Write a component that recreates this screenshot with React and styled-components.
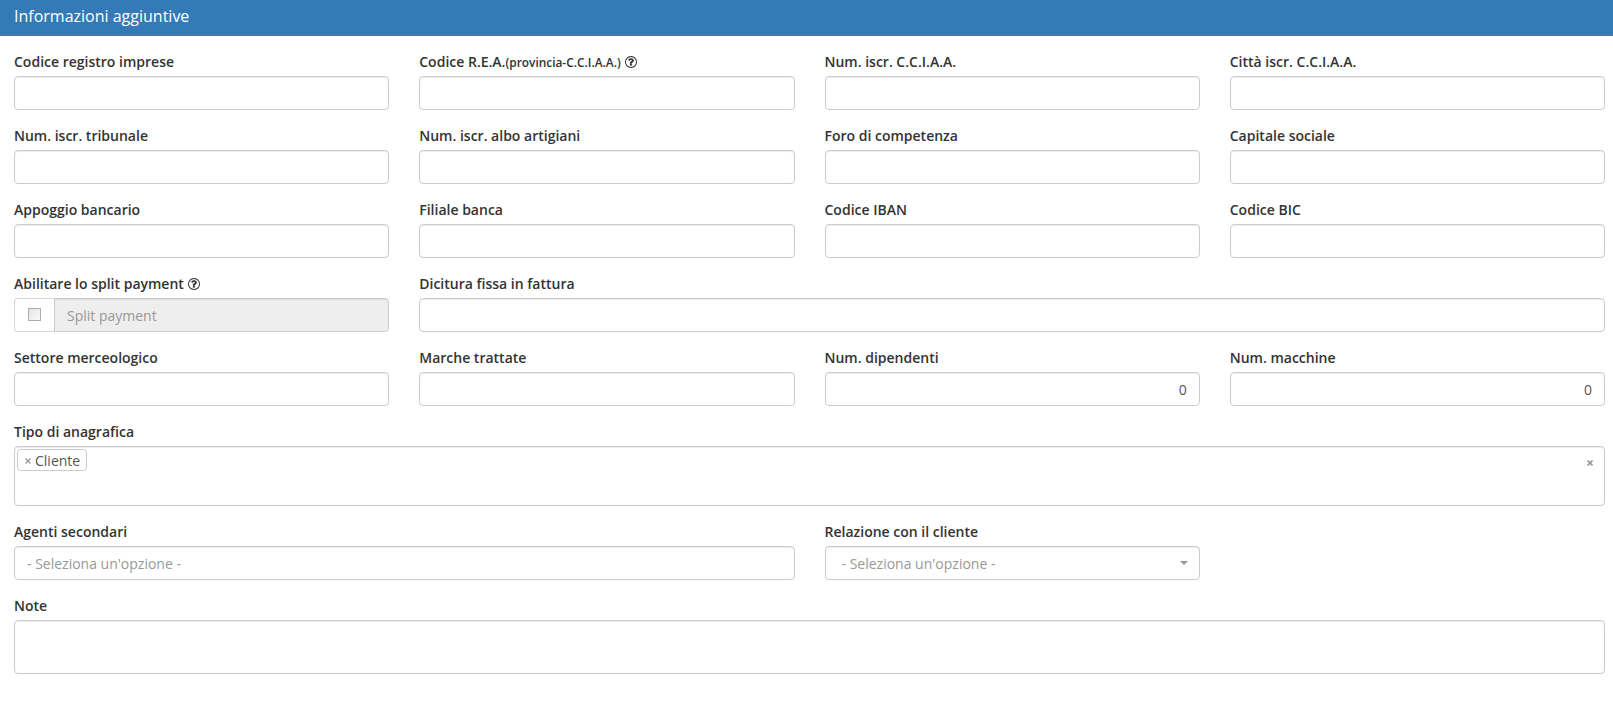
import React from "react";
import styled, { createGlobalStyle, css } from "styled-components";

const GlobalStyle = createGlobalStyle`
  *, *::before, *::after { box-sizing: border-box; }
  body {
    margin: 0;
    background: #fff;
    color: #333;
    font: 14px/20px "Open Sans", "Noto Sans", sans-serif;
  }
`;

const Panel = styled.section`
  width: 100%;
`;

const PanelHeading = styled.header`
  height: 36px;
  padding: 6px 14px;
  background: #337ab7;
  border-bottom: 2px solid #4e75ac;
`;

const PanelTitle = styled.h3`
  margin: 0;
  color: #fff;
  font-size: 16px;
  font-weight: 400;
  line-height: 20px;
`;

const FormGrid = styled.form`
  display: grid;
  grid-template-columns: repeat(4, minmax(0, 1fr));
  gap: 15px 30px;
  padding: 15px 8px 27px 14px;
`;

const FieldGroup = styled.div`
  grid-column: span ${(p) => p.$span || 1};
  display: flex;
  flex-direction: column;
  gap: 5px;
`;

const Label = styled.label`
  display: flex;
  align-items: center;
  height: 20px;
  padding-top: 2px;
  font-weight: 600;
  line-height: 20px;
  white-space: nowrap;
`;

const Small = styled.small`
  font-size: 85%;
`;

const HelpSvg = styled.svg`
  display: block;
  width: 12px;
  height: 12px;
  margin-left: 4.2px;
  fill: #333;
`;

const control = css`
  border: 1px solid #ccc;
  border-radius: 4px;
  background: #fff;
  box-shadow: inset 0 1px 1px rgba(0, 0, 0, 0.075);
  color: #555;
  font: inherit;
`;

const Input = styled.input`
  ${control}
  display: block;
  width: 100%;
  height: 34px;
  margin: 0;
  padding: 6px 12px;
  text-align: ${(p) => p.$align || "left"};
  outline: none;
  &::placeholder { color: #999; opacity: 1; }
`;

const Textarea = styled.textarea`
  ${control}
  display: block;
  width: 100%;
  height: 54px;
  margin: 0;
  padding: 6px 12px;
  resize: none;
  outline: none;
`;

const InputGroup = styled.div`
  display: flex;
`;

const Addon = styled.span`
  display: flex;
  flex: none;
  width: 40px;
  height: 34px;
  padding: 9px 0 0 13px;
  border: 1px solid #d2d6de;
  border-right: 0;
  border-radius: 4px 0 0 4px;
`;

const Checkbox = styled.input`
  appearance: none;
  width: 13px;
  height: 13px;
  margin: 0;
  border: 1px solid #acacac;
  background: linear-gradient(135deg, #e4e4e4, #fafafa);
`;

const DisabledInput = styled(Input)`
  border-radius: 0 4px 4px 0;
  background: #eee;
`;

const MultiSelect = styled.div`
  ${control}
  display: flex;
  justify-content: space-between;
  align-items: flex-start;
  height: 60px;
  padding: 2px 11px 0 2px;
`;

const Tag = styled.span`
  display: flex;
  align-items: center;
  gap: 4px;
  height: 22px;
  padding: 2px 6px 0 7px;
  border: 1px solid #ccc;
  border-radius: 4px;
  color: #555;
`;

const RemoveSvg = styled.svg`
  display: block;
  width: 6px;
  height: 6px;
  margin-top: ${(p) => p.$top || 0}px;
  stroke: #999;
  stroke-width: ${(p) => (p.$bold ? 1.7 : 1.4)};
`;

const HalfWidth = styled.div`
  width: calc(50% - 15px);
`;

const Select = styled.div`
  ${control}
  display: flex;
  align-items: center;
  justify-content: space-between;
  height: 34px;
  padding: 0 11px 0 16px;
  color: #999;
`;

const SelectText = styled.span`
  padding-top: 2px;
`;

const Caret = styled.span`
  border: 4px solid transparent;
  border-top-color: #999;
  border-bottom: 0;
`;

const HelpMark = styled.g`
  stroke: #333;
  stroke-width: 36;
`;

const HelpIcon = () => (
  <HelpSvg viewBox="128 128 1536 1536" aria-hidden="true">
    <HelpMark>
      <path d="M992 1152v160q0 14-9 23t-23 9h-160q-14 0-23-9t-9-23v-160q0-14 9-23t23-9h160q14 0 23 9t9 23z" />
      <path d="M1248 720q0 50-15 90t-45.500 69-52 44-59.500 36q-32 18-46.500 28t-26 24-11.500 29v12q0 14-9 23t-23 9h-160q-14 0-23-9t-9-23v-48q0-35 10.500-64.500t24-47.500 39-35.500 41-25.500 44.500-21q53-25 75-43t22-49q0-42-43.500-71.500t-95.500-29.500q-56 0-95 27-29 20-80 83-9 12-25 12-11 0-19-6l-108-82q-10-7-12-20t5-23q122-192 349-192 129 0 238.500 89.500t109.500 214.500z" />
    </HelpMark>
    <path d="M896 256q-130 0-248.500 51t-204 136.500-136.500 204-51 248.500 51 248.500 136.500 204 204 136.500 248.500 51 248.500-51 204-136.500 136.500-204 51-248.500-51-248.500-136.500-204-204-136.500-248.500-51zM1664 896q0 209-103 385.500t-279.500 279.500-385.500 103-385.500-103-279.500-279.500-103-385.500 103-385.500 279.500-279.500 385.500-103 385.500 103 279.500 279.500 103 385.500z" />
  </HelpSvg>
);

const RemoveIcon = ({ top, bold }) => (
  <RemoveSvg viewBox="0 0 6 6" $top={top} $bold={bold} aria-hidden="true">
    <path d="M0.500 0.500 5.500 5.500M5.500 0.500 0.500 5.500" />
  </RemoveSvg>
);

const Field = ({ label, note, help, span, children }) => (
  <FieldGroup $span={span}>
    <Label>
      <span>
        {label}
        {note && <Small>{note}</Small>}
      </span>
      {help && <HelpIcon />}
    </Label>
    {children || <Input type="text" />}
  </FieldGroup>
);

export default function App() {
  return (
    <Panel>
      <GlobalStyle />
      <PanelHeading>
        <PanelTitle>Informazioni aggiuntive</PanelTitle>
      </PanelHeading>
      <FormGrid>
        <Field label="Codice registro imprese" />
        <Field label="Codice R.E.A." note="(provincia-C.C.I.A.A.)" help />
        <Field label="Num. iscr. C.C.I.A.A." />
        <Field label="Città iscr. C.C.I.A.A." />

        <Field label="Num. iscr. tribunale" />
        <Field label="Num. iscr. albo artigiani" />
        <Field label="Foro di competenza" />
        <Field label="Capitale sociale" />

        <Field label="Appoggio bancario" />
        <Field label="Filiale banca" />
        <Field label="Codice IBAN" />
        <Field label="Codice BIC" />

        <Field label="Abilitare lo split payment" help>
          <InputGroup>
            <Addon>
              <Checkbox type="checkbox" />
            </Addon>
            <DisabledInput type="text" placeholder="Split payment" disabled />
          </InputGroup>
        </Field>
        <Field label="Dicitura fissa in fattura" span={3} />

        <Field label="Settore merceologico" />
        <Field label="Marche trattate" />
        <Field label="Num. dipendenti">
          <Input type="text" defaultValue="0" $align="right" />
        </Field>
        <Field label="Num. macchine">
          <Input type="text" defaultValue="0" $align="right" />
        </Field>

        <Field label="Tipo di anagrafica" span={4}>
          <MultiSelect>
            <Tag>
              <RemoveIcon />
              Cliente
            </Tag>
            <RemoveIcon top={11} bold />
          </MultiSelect>
        </Field>

        <Field label="Agenti secondari" span={2}>
          <Input type="text" placeholder="- Seleziona un'opzione -" />
        </Field>
        <Field label="Relazione con il cliente" span={2}>
          <HalfWidth>
            <Select>
              <SelectText>- Seleziona un'opzione -</SelectText>
              <Caret />
            </Select>
          </HalfWidth>
        </Field>

        <Field label="Note" span={4}>
          <Textarea />
        </Field>
      </FormGrid>
    </Panel>
  );
}
